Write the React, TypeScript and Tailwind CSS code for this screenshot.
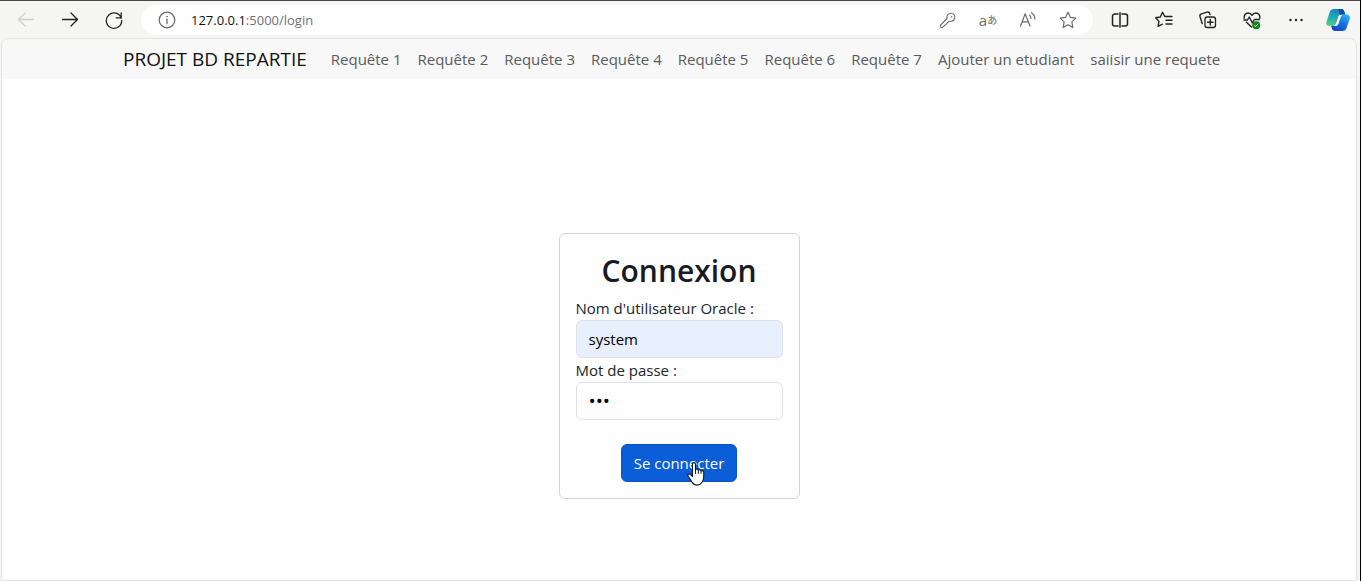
import type { ReactNode } from "react";

const queries = [
  "Requête 1",
  "Requête 2",
  "Requête 3",
  "Requête 4",
  "Requête 5",
  "Requête 6",
  "Requête 7",
  "Ajouter un etudiant",
  "saiisir une requete",
];

function Icon({ children }: { children: ReactNode }) {
  return (
    <svg
      viewBox="0 0 20 20"
      className="size-5"
      fill="none"
      stroke="currentColor"
      strokeWidth="1.3"
      strokeLinecap="round"
      strokeLinejoin="round"
      aria-hidden="true"
    >
      {children}
    </svg>
  );
}

function ToolButton({ label, children }: { label: string; children: ReactNode }) {
  return (
    <button type="button" aria-label={label} className="flex h-8 w-11 shrink-0 items-center justify-center text-[#222222]">
      {children}
    </button>
  );
}

function BarButton({ label, children }: { label: string; children: ReactNode }) {
  return (
    <button type="button" aria-label={label} className="flex h-7 w-10 shrink-0 items-center justify-center text-[#6b6b6b]">
      {children}
    </button>
  );
}

function BrowserBar() {
  return (
    <header className="flex items-center border-t border-[#4a4548] bg-[#f5f5f4] pt-[3px] pr-0.5 pb-0.5 pl-1">
      <button type="button" aria-label="Précédent" disabled className="flex h-8 w-11 shrink-0 items-center justify-center text-[#cfcfcf]">
        <Icon>
          <path d="M17.5 9.5h-15M9 3 2.5 9.500 9 16" />
        </Icon>
      </button>
      <ToolButton label="Suivant">
        <Icon>
          <path d="M2.500 9.500h15M11 3l6.500 6.500L11 16" />
        </Icon>
      </ToolButton>
      <ToolButton label="Actualiser">
        <Icon>
          <path d="M17.3 8.2A7.7 7.7 0 1 0 17.700 10.500M17.200 2.800v5h-5" />
        </Icon>
      </ToolButton>
      <div className="mx-[5px] flex h-[30px] min-w-0 flex-1 items-center rounded-full bg-[#fefefe] pr-[5px] pl-4 text-[#6b6b6b]">
        <Icon>
          <circle cx="10" cy="10" r="7.800" />
          <path d="M10 9.200v4.500" />
          <circle cx="10" cy="6.600" r="0.400" fill="currentColor" strokeWidth="0.800" />
        </Icon>
        <p className="ml-[14px] min-w-0 flex-1 truncate font-['Open_Sans','Noto_Sans',sans-serif] text-[13px] leading-5 text-[#70707a]">
          <span className="text-[#111111]">127.0.0.1</span>:5000/login
        </p>
        <BarButton label="Mot de passe enregistré">
          <Icon>
            <path d="M9.200 5.800a4 4 0 1 1 4.600 5.300l-2.800.2-6.400 6c-.8.700-2 .4-2.300-.6-.2-.7 0-1.200.4-1.700l6.300-6.500c-.2-1-.2-1.900.2-2.700z" strokeWidth="1.100" />
            <circle cx="13.600" cy="6.700" r="0.800" fill="currentColor" stroke="none" />
          </Icon>
        </BarButton>
        <BarButton label="Traduire la page">
          <span className="flex items-center font-['Open_Sans','Noto_Sans_CJK_JP',sans-serif] leading-5">
            <span className="text-[15px]">a</span>
            <span className="font-['Noto_Sans_CJK_JP',sans-serif] text-[10px]">あ</span>
          </span>
        </BarButton>
        <BarButton label="Lire à voix haute">
          <Icon>
            <path d="m2.500 16 4.700-12.200L12 16M4.200 11.800h6.100M11.500 5.200c1 .9 1.500 2 1.400 3.300M13.500 2.700c2.400 1.600 3.500 3.700 3.300 6.300" strokeWidth="1.200" />
          </Icon>
        </BarButton>
        <BarButton label="Ajouter aux favoris">
          <Icon>
            <path d="m10 2.300 2.400 5 5.400.8-3.900 3.800.9 5.500-4.800-2.600-4.800 2.600.9-5.500-3.900-3.800 5.400-.8z" strokeWidth="1.200" />
          </Icon>
        </BarButton>
      </div>
      <ToolButton label="Fractionner l'écran">
        <Icon>
          <path d="M8 4H4.800A2.300 2.300 0 0 0 2.500 6.300v7.400A2.300 2.300 0 0 0 4.800 16H8M12 4h3.200a2.300 2.300 0 0 1 2.300 2.300v7.400a2.300 2.300 0 0 1-2.300 2.300H12M10 2.800v14.400" strokeWidth="1.500" />
        </Icon>
      </ToolButton>
      <ToolButton label="Favoris">
        <Icon>
          <path d="M12 6.500h-1.200L8.500 2.300 6.300 7l-4.700.8 3.300 3.500-.8 5.100 4.300-2.200M12 6.500h6M12 10.200h6M12 14h6" strokeWidth="1.400" />
        </Icon>
      </ToolButton>
      <ToolButton label="Collections">
        <Icon>
          <rect x="7" y="7" width="10.500" height="10.500" rx="2.300" />
          <path d="M12.250 9.500v5.500M9.500 12.250H15M4.200 13.500 2 6.500a2.200 2.200 0 0 1 1.500-2.700l5.500-1.600a2.200 2.200 0 0 1 2.700 1.400l.3.900" strokeWidth="1.400" />
        </Icon>
      </ToolButton>
      <ToolButton label="Performances du navigateur">
        <Icon>
          <path d="M2.200 8.200C1.700 5.300 3.500 3 6 3c1.800 0 3.200.9 4 2.300C10.800 3.900 12.200 3 14 3c2.500 0 4.300 2.300 3.800 5.200M2 10h3.500l1.800-3 3 6 2-3.500h5M4.500 12.300 9.500 17" strokeWidth="1.400" />
          <circle cx="14.200" cy="15.300" r="4" fill="#13841c" stroke="none" />
          <path d="m12.600 15.600 1.200.9 2-2.300" stroke="#d9f5d7" strokeWidth="1" />
        </Icon>
      </ToolButton>
      <ToolButton label="Paramètres et plus">
        <Icon>
          <g fill="currentColor" stroke="none">
            <circle cx="4.500" cy="10" r="1.200" />
            <circle cx="10" cy="10" r="1.200" />
            <circle cx="15.500" cy="10" r="1.200" />
          </g>
        </Icon>
      </ToolButton>
      <button type="button" aria-label="Copilot" className="flex h-8 w-10 shrink-0 items-center justify-center">
        <svg viewBox="0 0 24 22" className="h-[22px] w-6" aria-hidden="true">
          <defs>
            <linearGradient id="copilot-left" x1="0.600" y1="0" x2="0.300" y2="1">
              <stop offset="0" stopColor="#1b80b4" />
              <stop offset="0.500" stopColor="#20a8bd" />
              <stop offset="1" stopColor="#55cf80" />
            </linearGradient>
            <linearGradient id="copilot-right" x1="0.800" y1="0" x2="0.300" y2="1">
              <stop offset="0" stopColor="#25b4f5" />
              <stop offset="0.500" stopColor="#1673e0" />
              <stop offset="1" stopColor="#1648c4" />
            </linearGradient>
          </defs>
          <path d="M8 0h7.500c1.500 0 2.300.9 2.800 2.500L19.200 5.500h-3c-2.200 0-3.300 1-3.900 2.900L10.200 14.500c-.6 1.700-1.500 2.500-3 2.500H3.500C1 17-.2 15.500.4 13L3.700 3C4.400 1 5.800 0 8 0z" fill="url(#copilot-left)" />
          <path d="M12.500 0h3c1.500 0 2.300.9 2.800 2.500L19.200 5.500h-3c-.9 0-1.600.2-2.200.5z" fill="#164aa7" />
          <path d="M17.500 5.500h3c2.500 0 3.900 1.700 3.300 4.100L20.500 19c-.7 2-2 3-4.200 3H9c-1.700 0-2.700-1-3.200-2.700L5.200 17h4c1.500 0 2.500-.8 3.100-2.500l2.200-6.300C15.100 6.300 16 5.500 17.500 5.500z" fill="url(#copilot-right)" />
          <path d="M13.300 6.300h3.200c-1 .3-1.500.9-1.900 2l-2.200 6.400c-.4 1.100-1 1.800-1.800 2.100H7.800c1.200-.3 1.900-1 2.300-2.300l2.100-6.200c.3-.9.600-1.500 1.100-2z" fill="#ffffff" />
        </svg>
      </button>
    </header>
  );
}

function HandCursor() {
  return (
    <svg viewBox="0 0 18 24" className="pointer-events-none absolute top-[18px] left-[66px] h-6 w-[18px]" aria-hidden="true">
      <path
        d="M5.500 2.200c0-1 .6-1.600 1.500-1.600s1.500.6 1.500 1.600v5.500c.3-.6.800-.8 1.300-.8.900 0 1.400.5 1.500 1.300.3-.4.700-.5 1.200-.5.800 0 1.400.5 1.500 1.300.3-.3.700-.4 1.100-.4 1 0 1.600.7 1.600 1.700V15c0 2.600-.8 4-1.700 5.300-1.200 1.900-2.500 2.800-4.700 2.800-2.500 0-3.900-1-5.300-3L1.300 14.500c-.6-.9-.6-1.700.1-2.300.7-.5 1.500-.3 2.200.4l1.900 1.900z"
        fill="#ffffff"
        stroke="#111827"
        strokeWidth="1.100"
        strokeLinejoin="round"
      />
      <path d="M8.500 7.500v4M11.300 8.500v3M14 9.500v2" stroke="#111827" strokeWidth="1" strokeLinecap="round" fill="none" />
    </svg>
  );
}

export default function App() {
  return (
    <div className="flex min-h-screen flex-col border-r border-black bg-[#f5f5f4] font-['Open_Sans','Noto_Sans',sans-serif] text-[15px] leading-6 text-[#212529]">
      <BrowserBar />
      <div className="mr-[3px] ml-px flex flex-1 flex-col overflow-hidden rounded-t-lg border border-[#e3e3e3] bg-[#fefefe]">
        <nav className="flex h-10 items-center bg-[#f8f8f9] pl-[121px] whitespace-nowrap">
          <a href="/" className="mr-4 text-[19px] text-[#111111]">
            PROJET BD REPARTIE
          </a>
          <ul className="flex">
            {queries.map((name) => (
              <li key={name}>
                <a href="#" className="block px-2 text-[#595a5c]">
                  {name}
                </a>
              </li>
            ))}
          </ul>
        </nav>
        <main className="flex flex-1 justify-center pt-[154px]">
          <form className="flex w-[241px] flex-col self-start rounded-md border border-[#d2d4d6] p-4" onSubmit={(e) => e.preventDefault()}>
            <h1 className="mb-1 text-center text-[30px] leading-[42px] font-semibold text-[#181b1f]">Connexion</h1>
            <label htmlFor="username">Nom d'utilisateur Oracle :</label>
            <input
              id="username"
              type="text"
              defaultValue="system"
              className="h-[38px] w-full rounded-md border border-[#dee2e6] bg-[#e8f0fe] px-3 text-black outline-none"
            />
            <label htmlFor="password">Mot de passe :</label>
            <input
              id="password"
              type="password"
              defaultValue="abc"
              className="h-[38px] w-full rounded-md border border-[#dee2e6] bg-[#fefefe] px-3 text-[19px] text-black outline-none"
            />
            <div className="relative mt-6 self-center">
              <button type="submit" className="h-[38px] rounded-md border border-[#0a53c4] bg-[#0b5ed7] px-3 text-white">
                Se connecter
              </button>
              <HandCursor />
            </div>
          </form>
        </main>
      </div>
    </div>
  );
}
